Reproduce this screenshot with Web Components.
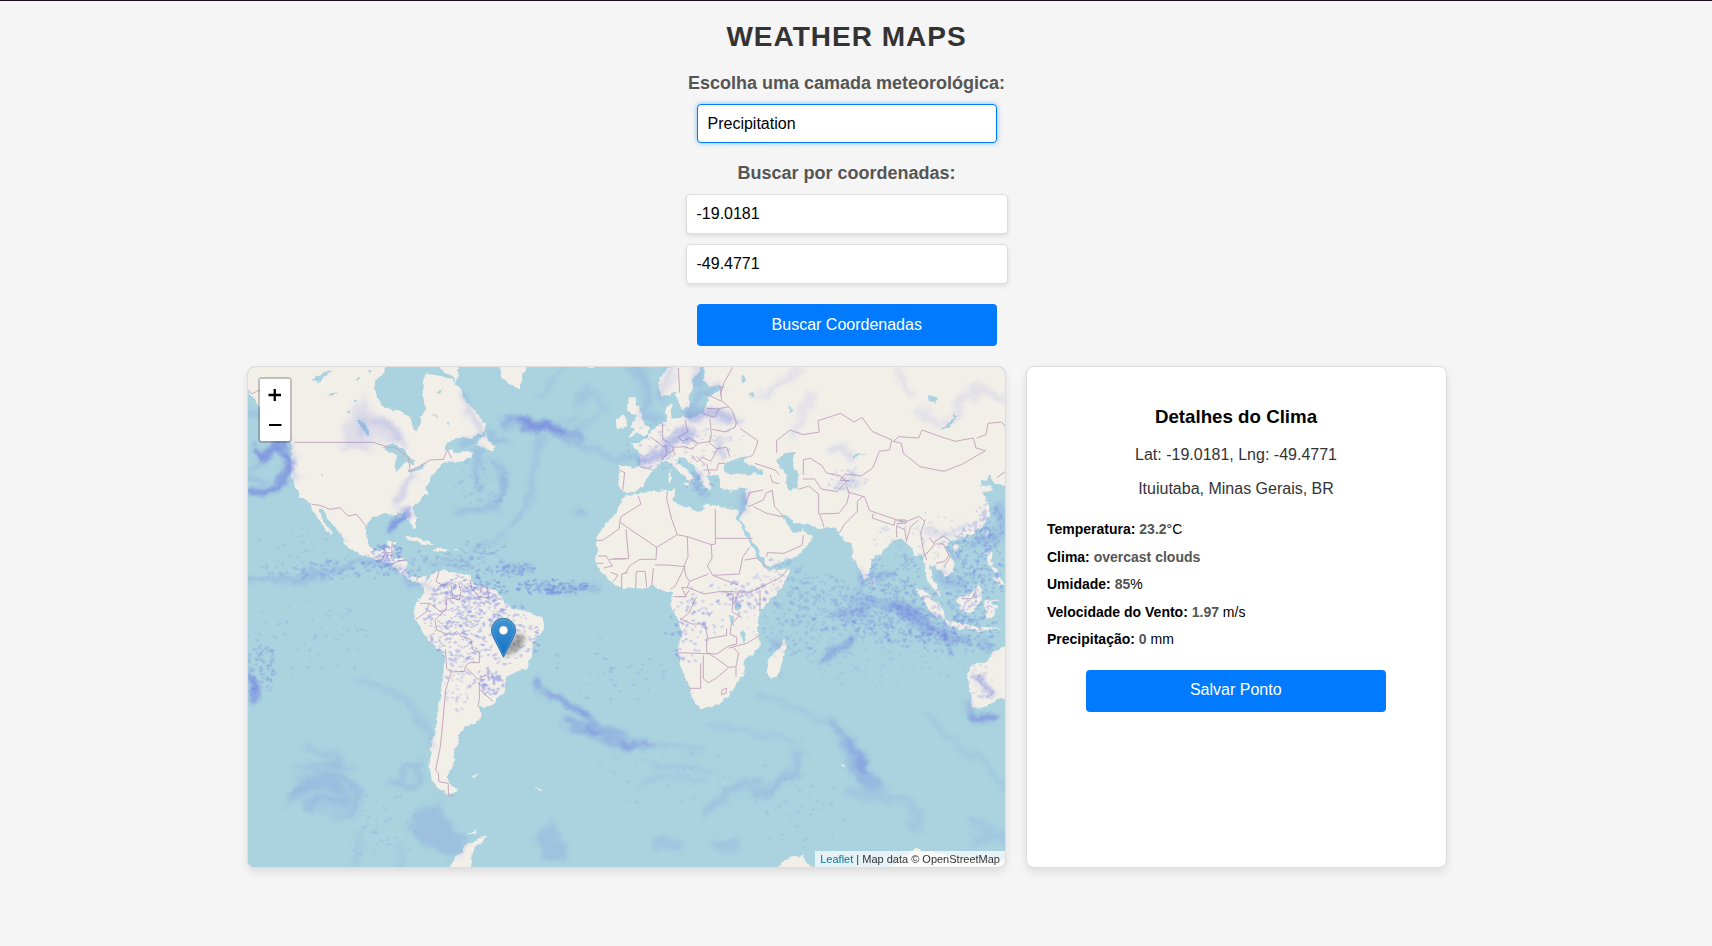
<!DOCTYPE html>
<html lang="pt-BR">
<head>
<meta charset="utf-8">
<title>Weather Maps</title>
<style>
html,body{margin:0;height:100%;background:#f5f5f5;overflow:hidden}
body{font-family:"Liberation Sans",Arial,sans-serif;color:#000}
</style>
</head>
<body>
<weather-app></weather-app>
<script>
const define = (name, html, init) => customElements.define(name, class extends HTMLElement {
  constructor() {
    super();
    this.attachShadow({ mode: 'open' }).innerHTML = html;
  }
  connectedCallback() { if (init) init(this.shadowRoot, this); }
});

define('field-label', `<style>:host{display:block;font-size:18px;line-height:20px;font-weight:bold;color:#555;text-align:center;white-space:nowrap;padding-right:1px}</style><slot></slot>`);

define('text-field', `<style>
:host{display:block;box-sizing:border-box;width:322px;height:40px;border:1px solid #ddd;border-radius:4px;background:#fff;box-shadow:0 2px 4px rgba(0,0,0,.1);padding:0 9.500px;font-size:16px;line-height:37px;color:#000}
:host([focused]){width:300px;height:39px;border-color:#007bff;box-shadow:0 0 5px rgba(0,123,255,.5)}
</style><slot></slot>`);

define('action-button', `<style>
:host{display:block}
button{display:block;width:300px;height:42px;border:0;border-radius:4px;background:#007bff;color:#fff;font:16px/18px "Liberation Sans",Arial,sans-serif;padding:0 0.500px 1px 0;margin:0}
</style><button><slot></slot></button>`);

define('detail-row', `<style>
:host{display:block;font-size:14px;line-height:17px;height:27.5px;white-space:nowrap}
b{font-weight:bold}.v{font-weight:bold;color:#555}
</style><b><slot name="label"></slot></b> <span class="v"><slot></slot></span><slot name="unit"></slot>`);

define('weather-details', `<style>
:host{display:flex;flex-direction:column;box-sizing:border-box;width:421px;height:502px;background:#fff;border:1px solid #ddd;border-radius:8px;box-shadow:0 4px 8px rgba(0,0,0,.1);padding:38px 21px 20px 20px}
h3{margin:0;font-size:18.72px;line-height:24px;text-align:center}
p{margin:0;font-size:16px;line-height:18px;text-align:center;color:#333}
.a{margin-top:17px}.b{margin-top:16px}
.rows{margin-top:23px}
action-button{align-self:center;margin-top:11px}
</style>
<h3>Detalhes do Clima</h3>
<p class="a">Lat: -19.0181, Lng: -49.4771</p>
<p class="b">Ituiutaba, Minas Gerais, BR</p>
<div class="rows">
<detail-row><span slot="label">Temperatura:</span>23.2<span slot="unit">°C</span></detail-row>
<detail-row><span slot="label">Clima:</span>overcast clouds</detail-row>
<detail-row><span slot="label">Umidade:</span>85<span slot="unit">%</span></detail-row>
<detail-row><span slot="label">Velocidade do Vento:</span>1.97<span slot="unit"> m/s</span></detail-row>
<detail-row><span slot="label">Precipitação:</span>0<span slot="unit"> mm</span></detail-row>
</div>
<action-button>Salvar Ponto</action-button>`);

define('zoom-control', `<style>
:host{display:block;width:30px;border:2px solid rgba(0,0,0,.2);border-radius:4px;background-clip:padding-box}
div{background:#fff;height:31px;box-sizing:border-box;display:grid;place-items:center}
div:first-child{border-radius:2px 2px 0 0;border-bottom:1px solid #ccc}
div:last-child{border-radius:0 0 2px 2px;padding-bottom:1px}
svg{display:block}
</style>
<div><svg width="14" height="14"><path d="M.5 7h12.500M6.750 1v12" stroke="#000" stroke-width="2.300"/></svg></div>
<div><svg width="14" height="14"><path d="M1 7h12.500" stroke="#000" stroke-width="2"/></svg></div>`);

define('map-marker', `<style>:host{display:block;width:46px;height:42px}svg{display:block;overflow:visible}</style>
<svg width="46" height="42" viewBox="0 0 46 42"><defs>
<linearGradient id="g" x2="0" y2="1"><stop stop-color="#4296d1"/><stop offset="1" stop-color="#126fc6"/></linearGradient>
<linearGradient id="o" x2="0" y2="1"><stop stop-color="#2e6c97"/><stop offset="1" stop-color="#3883b7"/></linearGradient>
<filter id="b" x="-50%" y="-50%" width="200%" height="200%"><feGaussianBlur stdDeviation="2.800"/></filter></defs>
<path d="M13 39C16 30 22 18 28 16c7-1 7 6 3 11-4 6-12 10-18 12z" fill="#000" opacity=".34" filter="url(#b)"/>
<path d="M12.500.5C5.900.5.5 5.900.5 12.300c0 2.600 1.200 5.600 2.300 7.900L12.500 39.300l9.700-19.100c1.100-2.300 2.300-5.300 2.300-7.900C24.500 5.900 19.100.5 12.500.5z" fill="url(#g)" stroke="url(#o)"/>
<path d="M12.500 1.600C6.500 1.600 1.600 6.400 1.600 12.300c0 2.400 1.100 5.200 2.200 7.400l8.700 17.300 8.700-17.300c1.100-2.200 2.200-5 2.200-7.400 0-5.900-4.900-10.700-10.900-10.700z" fill="none" stroke="#fff" stroke-opacity=".15"/>
<circle cx="12.500" cy="12.300" r="4.500" fill="#fff" stroke="#2e6c97" stroke-opacity=".5"/></svg>`);

define('world-map', `<style>:host{display:block;width:757px;height:500px}svg{display:block}
.land{fill:#f2efe9}.sea{fill:#aad3df}
.bord{fill:none;stroke:#c5a9bf;stroke-width:3;stroke-linejoin:round}
.rain path{fill:none;stroke:#6a78e0;stroke-linecap:round;stroke-linejoin:round}
</style>
<svg width="757" height="500" viewBox="24 21 2271 1500" preserveAspectRatio="none">
<defs>
<filter id="rough" filterUnits="userSpaceOnUse" x="-20" y="-20" width="2360" height="1600"><feTurbulence type="fractalNoise" baseFrequency=".045" numOctaves="3" seed="4"/><feDisplacementMap in="SourceGraphic" scale="18" xChannelSelector="R" yChannelSelector="G"/></filter>
<filter id="cloud" filterUnits="userSpaceOnUse" x="-20" y="-20" width="2360" height="1600"><feTurbulence type="fractalNoise" baseFrequency=".02" numOctaves="4" seed="9" result="n"/><feGaussianBlur in="SourceGraphic" stdDeviation="8" result="s"/><feDisplacementMap in="s" in2="n" scale="42" xChannelSelector="R" yChannelSelector="G"/></filter>
<filter id="spk" filterUnits="userSpaceOnUse" x="-20" y="-20" width="2360" height="1600"><feGaussianBlur stdDeviation="1.800"/></filter>
</defs>
<rect class="sea" x="24" y="21" width="2271" height="1500"/>
<g filter="url(#rough)">
<g class="land">
<path d="M0 0V75L45 120 70 160 110 215 150 245 155 265 152 350 165 380 185 410 212 430 225 465 245 490 272 527 277 520 252 482 234 445 250 452 264 477 285 500 310 535 315 555 350 575 390 592 425 600 455 612 485 640 505 658 530 664 552 680 558 652 530 650 510 652 498 630 500 600 470 595 446 594 470 543 445 545 438 565 400 572 380 550 378 500 400 468 440 462 470 465 495 455 505 480 520 505 528 500 524 470 515 440 540 420 560 400 560 375 570 350 590 330 610 310 635 305 650 310 690 292 704 278 680 272 655 282 638 268 610 275 620 250 640 235 700 232 735 215 735 190 700 150 672 110 660 80 645 70 610 50 560 40 545 60 550 110 555 150 540 170 540 200 530 215 515 190 510 165 460 150 420 130 405 100 405 70 430 40 440 0z"/>
<path d="M560 0l40 22 50 45 8-40 6-28zM706 258l14-25 22-12 6 22 16 18-10 14-22-14zM492 536l30-8 34 14 26 14-34-2-28-14zM580 566l20-8 28 10-26 6-24-4zM534 569l16 2M640 568l14 1-6 6z"/>
<path d="M552 672 550 705 525 730 520 765 540 800 560 840 590 865 613 885 610 950 600 1020 590 1080 580 1130 572 1180 568 1220 575 1260 600 1290 625 1302 655 1290 630 1275 625 1245 645 1200 640 1170 655 1150 660 1120 680 1100 720 1080 725 1060 715 1040 745 1045 765 1025 790 995 800 950 830 935 860 925 875 890 880 850 912 805 910 780 870 757 820 745 790 725 775 700 755 685 740 680 700 670 690 645 650 640 610 630 590 635 570 645z"/>
<path d="M690 1245l26-4-14 12zM775 0l10 50 25 22 30 13 5-25 18-60zM1045 0h24l-8 24h-16zM886 1280l16 8 6 8-10-5zM1800 1212l14 4-6 6z"/>
<path d="M1185 108 1165 122 1158 148 1170 162 1185 165 1180 185 1170 200 1185 210 1165 228 1190 222 1225 222 1230 205 1215 190 1205 165 1190 130zM1128 180l22-17 12 17-7 25-25 8z"/>
<path d="M1310 0 1262 50 1255 80 1265 110 1290 105 1305 95 1315 125 1322 152 1345 140 1350 110 1360 85 1355 60 1375 40 1390 0z"/>
<path d="M1395 0 1392 60 1410 80 1450 78 1440 92 1410 105 1400 130 1390 160 1350 175 1320 170 1300 180 1290 160 1302 130 1280 138 1278 170 1275 185 1240 210 1215 235 1200 245 1170 255 1195 270 1202 300 1200 320 1135 318 1140 340 1135 370 1140 390 1160 400 1190 395 1205 385 1215 360 1235 340 1250 318 1280 300 1300 320 1330 345 1350 360 1345 375 1360 355 1340 330 1315 305 1320 290 1340 300 1365 325 1380 355 1395 380 1408 390 1410 370 1400 350 1420 345 1435 345 1440 360 1440 380 1470 395 1500 390 1520 385 1515 430 1508 455 1502 478 1530 530 1560 580 1584 620 1640 600 1680 580 1722 530 1715 520 1690 515 1690 492 1710 497 1740 505 1780 500 1795 515 1815 545 1835 550 1840 590 1860 640 1875 655 1890 640 1895 600 1920 580 1955 545 1990 535 2000 550 2015 560 2025 590 2045 580 2055 610 2060 660 2085 690 2100 710 2100 690 2075 650 2068 615 2085 620 2110 640 2115 650 2140 630 2140 600 2115 560 2125 545 2160 535 2200 520 2235 490 2250 465 2250 440 2235 410 2228 395 2260 388 2250 375 2220 382 2230 362 2250 350 2270 375 2310 378V0z"/>
<path d="M1155 410 1180 402 1280 390 1305 390 1300 420 1320 437 1355 445 1385 455 1395 435 1430 440 1480 447 1500 450 1490 475 1520 530 1550 590 1582 632 1650 628 1640 660 1600 710 1560 750 1552 790 1560 850 1555 865 1510 910 1515 945 1495 960 1480 990 1440 1035 1380 1045 1365 1030 1350 990 1330 940 1312 880 1325 820 1315 780 1290 740 1296 700 1265 692 1245 678 1200 682 1150 688 1130 680 1100 650 1070 620 1065 600 1072 560 1068 540 1090 500 1110 480 1130 460 1135 440z"/>
<path d="M1632 835l8 25-25 85-20 10-15-20 10-45 30-25zM2310 840 2260 880 2245 900 2190 920 2183 960 2195 1010 2195 1040 2215 1048 2245 1030 2310 1010zM2025 680l35 20 50 50 8 28-25-5-30-28zM2115 780l50 10 60 14 60-2-64 14-100-18zM2150 715l45-15 20-27 12 18-10 40-22 30-35-10zM2238 580l16-8-2 32 22 28-14 4-16-24zM2262 655l20-4 12 20-18 8zM2232 722l50-8-32 14 22 10-18 40-14-4zM1892 648l14 8 4 16-10 6zM2142 556l14-2v12l-12 4zM2238 510l8-4-2 26-6-6zM1326 365l26 0-4 14zM1286 345l8-2 2 24-10 2zM1290 328l4 0v16l-4-2z"/>
<path d="M620 1535 650 1490 690 1450 725 1430 742 1432 700 1465 695 1510 690 1535zM1610 1520 1650 1490 1690 1485 1700 1505 1730 1535h-125zM1930 1530 2000 1485 2025 1465 2040 1472 2150 1490 2300 1500v35zM680 1424l36-20-8 14z"/>
</g>
<path class="sea" d="M1450 328 1462 305 1500 292 1530 288 1510 305 1565 330 1568 342 1500 345 1455 340zM1612 298 1640 278 1665 280 1655 305 1675 345 1672 388 1640 390 1635 350 1618 318zM1622 462l14-2 26 28 30 4-8 26-24 0-14-24zM430 265l30-15 30 15 20 30 16 4-8 14-20-8-26 32-10-12 10-40-28-10zM505 332l55-24-10 18-42 12zM352 180l16 0 20 34-6 16-12-22zM218 60l16-14 24-8 22-8-26 22-18 18zM260 104l34-10-20 14zM335 120l14-2-8 16zM2100 213l34-26 14-36-4 34-20 22zM1838 288l44-12-42 20zM1498 385v50l20 20v-65zM1484 730h18v20h-18zM1465 760l8 30 14 10-8-30zM1502 812l10 40 6-10-8-32zM1500 50l14-6 8 18-12 8zM1530 95l10-2 4 16-10 4zM2062 105l30 6-4 20-18-8zM575 170l10-4 4 8zM590 95l14-6 0 10zM620 190l12-4-4 10zM350 50l12 4-8 6zM380 30l14 2-6 10zM1645 130l10 20-6 10zM320 160l8-8 2 12zM245 340l8 2-2 8z"/>
</g>
<g class="bord">
<path d="M165 247H400L440 260 470 265 505 292 510 325 505 335 540 318 570 300 610 298 622 270 635 295M0 65L36 102 56 90 90 130 130 200 140 240M216 433L240 436 270 448 300 443 325 468 350 463 378 498M425 600l12-22h18l2-30M445 600l22-18M455 612l22-10 22-2M485 640l14-12M530 662l4-14"/>
<path d="M598 630l-10 35 20 10 25 0 5 40 20 5 5-25-8-28M690 660l5 25 20 25 32 5-5-32M720 700l4-22 22 6M540 730l28 0-10 26-30 22M570 730l35 28 14-8 0-35 20 0M615 750l-30 30 5 30 30 12 20 0 10-8 12 14 30 10 6 30 20 10 0 30-30 0-12 10-2 16-40 2-14-10-4-58M680 924l35 35 8-8 26-8M718 968l0 50-4 22M720 990l40 35M635 930l-18 60-8 90-8 80-14 70 8 10 2 25 28 5v38h18"/>
<path d="M1140 330l14 8-6 54M1200 320l35 8M1230 230l40 30 10 0 0 20-14 20M1268 190l0 46 18 12M1335 180l8 36-28 16 14 12 20-10 26 16-20 18-20-8-38 2 8 24M1375 250l36-6M1410 178l4 48-6 22 24 20-20 36-26-12-14 14-18-20M1415 208l40 8 30-14 4-14-12-36-14-14-18-16-5-44M1460 214l-8 0M1500 205l54 38-14 40-10 8M1393 162l30 10 14-26 30-6M1400 145l40 2M1395 100l50 24M1440 108l12-40 26-46M1315 24l4 74M1400 310l8 36M1370 290l26 24M1390 330l40 0 6-20 20 0M1430 266l30-4 10 30M1265 300l20-20 20-14"/>
<path d="M1195 408l8 24-60 38-5 24 0 12-50 35h-20M1140 487l110 75M1158 508l8 88-56 2M1120 596l36 0M1250 562l-2 36-48 0-30 18-14 24M1250 562l62-38-18-50-14-56 2-26M1312 524l30 6 72 24 12-2V447M1426 535h112M1342 530l2 60-12 28 6 30 10 16M1245 615l40 0 40 4 10 0-30 60-14 8M1414 554l2 40-14 24 16 28 78 30M1418 646l80-4 10-50 20-30M1405 642l-56 22-8 20-16-2 14 28h-38M1235 680l5-56M1220 680l-5-46h-26l-2 50M1145 686l0-44 18-4M1120 665l14-20-22-8M1070 610h20M1075 588l24 0 18 30-26 6M1342 682l50 20 50-8 60 2 30 0 30-14 60-30 20-22M1580 620l-30-26-36 6M1370 710l-24 50-26 20M1310 710l24 0 14-20M1450 695l30 10-4 50 30 18M1500 690l-20 45M1560 750l0-60M1320 776l36 16 38 0 10 44 56-10 0-20M1314 878l116 4 36-24 24-6 0-20-20-10 4-30 24-24M1400 836l0 40 30 20 36 26-36 32-26 14-14-12V886M1466 922l22-2 8-40-16-18-14 2M1488 920v30M1350 985l32 0V910M1446 990l14-6-2 16-14 4zM1480 860l40-10 40-24"/>
<path d="M1515 432l14-34 40-8M1525 440l45-20 8-20 20-10M1540 440l40 20 46 10M1596 390l8 50 22 24M1545 310l60 20 14 16M1590 345l8 22 20 4M1580 590l2-12 50 2 32-14 22-10 4-30M1610 278l0-36 40-32 40 14 48-8-4-34 68-22 40 26 24-14 30 42 60 26-8 30-30 4-20 50-34 24-50-6-14 20 30 0M1690 345v-46l20-4 34 20 16 24 40 8 20 18-30 30-46-8-20-30-36 0M1676 388l30-10 30 24 0 60 60-2 24-30 8-30-8-20M1740 465l12 36M1822 395l52 16 14 40 28 10 70 24 12 0 40-16 14 14M1868 410l-16 14 0 30-40 40-12 22M1900 460l-4 14 66 22 4-18M1968 480l30 0 0 10-28 0M1970 496l0 36M2000 545l-6-36-22-10M2000 540l12-40 24-20M2060 600l-8-22-6-30-4-30 14-40M2050 590l20-20 14-18-16-18M2086 552l24 0 20 40-14 22M2080 548l30-20 20 14M2088 610l26-6 16-24M1960 244l16-14 60 4 10-24 50 18 50 16 54-10 8 30 28 8-68 40-56 22-72-14-50-40-6-30zM2210 234l28-10 6-34 40-4 20 22M2166 716l30 0 14-30M2295 335l-24 18"/>
</g>
<g class="rain">
<g filter="url(#cloud)">
<path d="M45 265l26 20M75 290l10-30 40-4 25 50-20 50-45 35-60 10" stroke-width="20" opacity=".68"/>
<path d="M40 330l80-70M20 350l50 20M20 155l60 20" stroke-width="16" opacity=".2"/>
<path d="M375 105L345 150 305 210 310 265 385 275 400 235 480 255 500 240 460 195 395 160z" style="fill:#6a78e0" stroke-width="4" opacity=".15"/>
<path d="M390 180l60 20 40 50M360 170l10 50" stroke-width="16" opacity=".2"/>
<path d="M470 430l26-50 28-24" stroke-width="22" opacity=".24"/>
<path d="M450 515l20-40 30-22" stroke-width="18" opacity=".75"/>
<path d="M20 665l100-10 60 5 65-30 0 20 50-16 50-30 70-2 60 20 40 50 60 15" stroke-width="8" opacity=".5"/>
<path d="M560 605l60 8 70-20M700 575l60-30 40-20" stroke-width="10" opacity=".22"/>
<path d="M670 110l20 60 40 30M670 260l50-40 80 20M660 455l80-10 40-40 14-60-30-40M720 270l-14 60 20 60M160 260l-5 70 20 20" stroke-width="22" opacity=".2"/>
<path d="M790 188l50-2 80 20 60 10 40 16" stroke-width="24" opacity=".36"/>
<path d="M850 190l60 10 50 14" stroke-width="26" opacity=".55"/>
<path d="M905 220l-20 90-20 120-50 70M950 230l160 60 110 15M760 340l35 30-10 40-20 40" stroke-width="12" opacity=".24"/>
<path d="M960 180l50 0M1014 140l0-30 30-20 35 20 20 40M900 120l60-100M1010 210l70-40M1060 100l-30 10 0 30" stroke-width="9" opacity=".2"/>
<path d="M1200 20l20 60-10 90 50 10M1170 20l50 50M1300 20l-40 90M1340 160l40-60 60-20M1380 20l-10 50" stroke-width="26" opacity=".17"/>
<path d="M1210 300l60-20 20-40 60-20" stroke-width="36" opacity=".4"/>
<path d="M1370 160l60 0 50 20M1350 170l40-6" stroke-width="32" opacity=".36"/>
<path d="M1440 250l10 40M1520 400l-14 50M1390 400l-20-50" stroke-width="18" opacity=".3"/>
<path d="M1660 230l20-50 30-80M1560 110l120-80M1970 30l40 70M2030 150l60 40 60-20 20-60 60-10M2190 80l100 30" stroke-width="22" opacity=".12"/>
<path d="M1780 270l40-10 20 30M1790 380l50-5 0-40M2060 510l60 20 60-30" stroke-width="16" opacity=".2"/>
<path d="M20 940l26 40-6 40" stroke-width="18" opacity=".68"/>
<path d="M350 970l80 10 70 40 50 70 25 80" stroke-width="6" opacity=".36"/>
<path d="M200 1160l80 30 60 30M180 1220l140-10M150 1300l70-50 90-5 45 50-10 60-60 20M170 1280l100-10 50 40M200 1350l40-40 80 20M150 1330l60-60 90 0" stroke-width="16" opacity=".17"/>
<path d="M180 1240L300 1210 360 1290 340 1350 210 1360 150 1310z" style="fill:#6a78e0" stroke-width="4" opacity=".1"/>
<path d="M460 1270l50-50 30-10 0 50-40 20z" stroke-width="20" opacity=".18"/>
<path d="M590 1320L515 1370 505 1400 540 1450 600 1478 665 1490 680 1440 630 1400z" style="fill:#6a78e0" stroke-width="4" opacity=".2"/>
<path d="M885 955l14 25M910 1000l60 25 60 40" stroke-width="14" opacity=".65"/>
<path d="M970 1080l70 30 60 30 60 15 70-4M1030 1060l50 50 60 10" stroke-width="24" opacity=".34"/>
<path d="M1030 1095l40 25M1140 1150l40 5" stroke-width="10" opacity=".5"/>
<path d="M1220 1153l170 14M1400 1095l120 20 160 30M1200 1270l80-20 120 15M1230 1215l180 20M355 1420l-5 100M480 1450v80" stroke-width="8" opacity=".2"/>
<path d="M935 1385l-40 60 20 50 60 0-20-50z" style="fill:#6a78e0" stroke-width="14" opacity=".16"/>
<path d="M1400 1350l50-40 60-40 50-5M1425 1450l40 20 20-20M1250 1450l60 5" stroke-width="28" opacity=".15"/>
<path d="M1550 1305l70-30 50-40 5-60M1540 1300l50 0 60-60" stroke-width="24" opacity=".19"/>
<path d="M1780 1090l50 80 50 60 50 60-60-10-30-60z" style="fill:#6a78e0" stroke-width="16" opacity=".28"/>
<path d="M1825 1140l30 40 25 50" stroke-width="20" opacity=".42"/>
<path d="M1830 1300l70 10 90 10 50 40-10 50-30-30M2190 1380l60 30 50 30M2200 1440l90-20" stroke-width="26" opacity=".13"/>
<path d="M2060 1060l60 70 100 70 80 90M1550 1000l100 40 140 50" stroke-width="10" opacity=".18"/>
<path d="M1745 905l30-20 10-20M1805 870l30-40" stroke-width="18" opacity=".5"/>
<path d="M2210 950l50 50M2200 1080l60-8" stroke-width="18" opacity=".5"/>
<path d="M2180 1030l20 40 60 0M1600 850l20-8" stroke-width="20" opacity=".3"/>
<path d="M1960 740l60 10M2000 770l60 30 60 30 60 10" stroke-width="24" opacity=".36"/>
<path d="M1850 720l120 20 80 30M1870 650l-10 30M1900 650l50-10M2100 650l70 20M2200 560l80-40M1780 770l100-20M2230 850l20 20M2280 440l10 70" stroke-width="24" opacity=".24"/>
<path d="M1010 450l20 20M790 630l80-10M900 680l60 10 110-10" stroke-width="14" opacity=".3"/>
</g>
<g id="dots" filter="url(#spk)"></g>
</g>
</svg>`, root => {
  // scattered showers: [cx, cy, rx, ry, count, opacity]
  const areas = [[670,780,120,130,330,.34],[810,830,90,100,110,.32],[690,690,110,45,100,.36],[650,960,40,90,45,.28],[740,965,55,40,55,.48],
    [1340,800,70,110,50,.42],[1420,740,100,80,45,.36],[1520,700,60,50,55,.36],[440,590,50,40,50,.45],[300,630,260,28,90,.28],[200,840,190,130,55,.16],
    [60,930,50,80,70,.32],[940,680,120,22,110,.38],[820,630,70,18,35,.34],[1100,930,180,100,40,.16],[1700,800,190,110,120,.2],[1800,730,210,90,240,.25],[2000,770,200,90,280,.32],
    [2140,820,150,60,120,.35],[2200,640,90,150,230,.3],[2240,500,50,70,80,.28],[1620,650,80,60,60,.22],[1950,640,90,60,80,.26],[1850,900,350,80,80,.13],
    [640,620,170,60,80,.22],[720,590,90,50,40,.24],[1300,1250,300,90,50,.1],[1680,1350,150,120,45,.13],[420,1400,120,110,40,.15],[1250,260,90,70,40,.22],[1380,350,50,60,30,.22],[2220,970,40,60,30,.22],[1420,250,100,60,40,.18],[1820,360,60,40,30,.2],[2040,530,140,70,60,.18],[200,570,160,80,35,.12],[720,370,90,80,45,.14]];
  let s = 12345;
  const r = () => (s = (s * 1103515245 + 12345) & 0x7fffffff) / 0x7fffffff;
  let out = '';
  for (const [x, y, a, b, n, o] of areas) {
    let thin = '', thick = '';
    for (let i = 0; i < n; i++) {
      const t = r() * 6.283, q = Math.pow(r(), .6);
      const seg = 'M' + (x + Math.cos(t) * q * a).toFixed(1) + ' ' + (y + Math.sin(t) * q * b).toFixed(1) + 'l' + (r() * 7 + .5).toFixed(1) + ' ' + (r() * 9 - 4.5).toFixed(1);
      if (r() < .25) thick += seg; else thin += seg;
    }
    out += '<path d="' + thin + '" stroke-width="4.500" opacity="' + o + '"/><path d="' + thick + '" stroke-width="7.500" opacity="' + o + '"/>';
  }
  root.getElementById('dots').innerHTML = out;
});

define('weather-map', `<style>
:host{display:block;position:relative;box-sizing:border-box;width:759px;height:502px;border:1px solid #ddd;border-radius:8px;box-shadow:0 4px 8px rgba(0,0,0,.1);overflow:hidden;background:#aad3df}
zoom-control{position:absolute;left:10px;top:10px}
map-marker{position:absolute;left:243px;top:251px}
.attr{position:absolute;right:0;bottom:0;height:16px;padding:0 5px;background:rgba(255,255,255,.7);font-size:11px;line-height:16px;color:#333;white-space:nowrap}
.attr span{color:#0078a8}
</style>
<world-map></world-map><map-marker></map-marker><zoom-control></zoom-control>
<div class="attr"><span>Leaflet</span> | Map data © OpenStreetMap</div>`);

define('weather-app', `<style>
:host{display:flex;flex-direction:column;align-items:center;box-sizing:border-box;width:100%;height:946px;border-top:1px solid #170f20;padding-right:18px}
h1{margin:20px 0 0;padding-right:1px;font-size:28px;line-height:32px;letter-spacing:1px;color:#333}
.l1{margin-top:20px}.s{margin-top:11px}
.l2{margin-top:20px}.i1{margin-top:11px}.i2{margin-top:10px}
.go{margin-top:20px}
main{display:flex;width:1200px;justify-content:space-between;margin-top:20px}
</style>
<h1>WEATHER MAPS</h1>
<field-label class="l1">Escolha uma camada meteorológica:</field-label>
<text-field class="s" focused>Precipitation</text-field>
<field-label class="l2">Buscar por coordenadas:</field-label>
<text-field class="i1">-19.0181</text-field>
<text-field class="i2">-49.4771</text-field>
<action-button class="go">Buscar Coordenadas</action-button>
<main><weather-map></weather-map><weather-details></weather-details></main>`);
</script>
</body>
</html>
